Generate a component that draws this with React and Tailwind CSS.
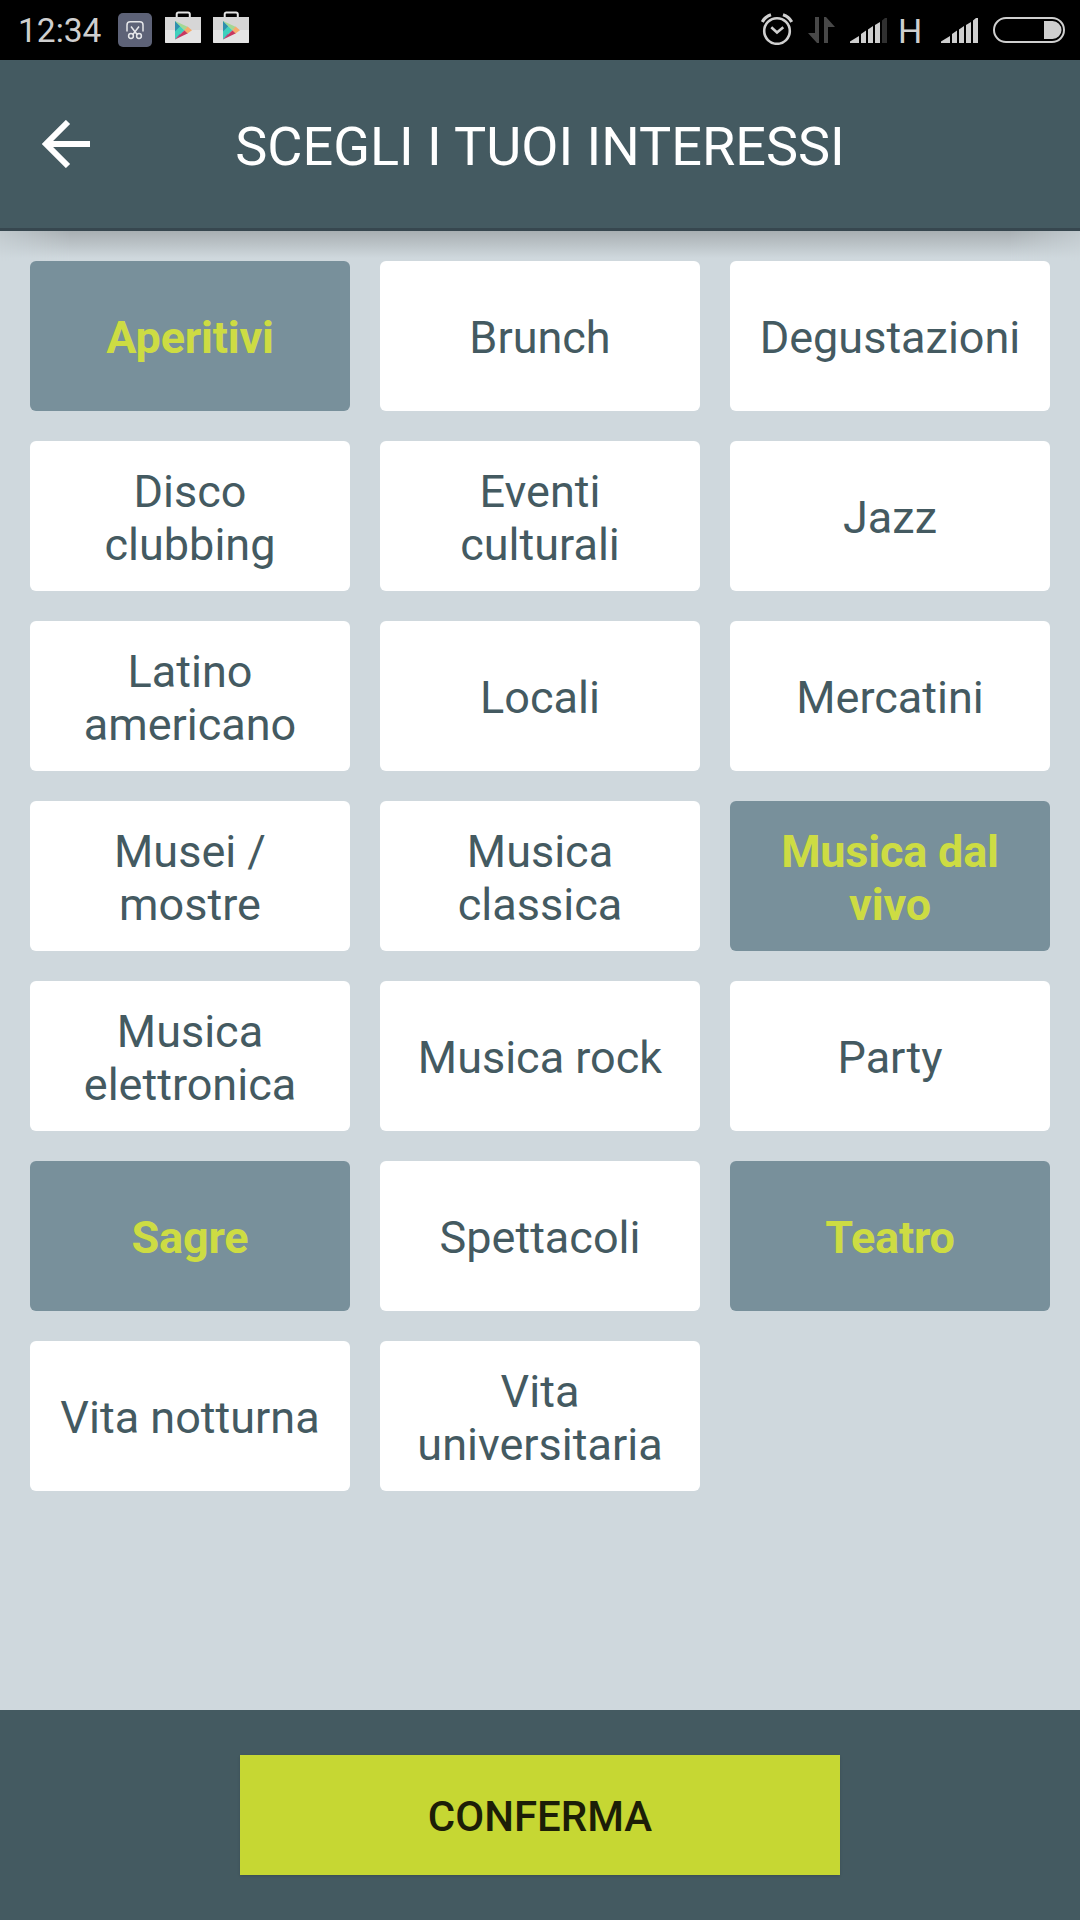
import React, { useState } from "react";

const interests = [
  { id: "aperitivi", label: "Aperitivi" },
  { id: "brunch", label: "Brunch" },
  { id: "degustazioni", label: "Degustazioni" },
  { id: "disco", label: "Disco clubbing" },
  { id: "eventi", label: "Eventi culturali" },
  { id: "jazz", label: "Jazz" },
  { id: "latino", label: "Latino americano" },
  { id: "locali", label: "Locali" },
  { id: "mercatini", label: "Mercatini" },
  { id: "musei", label: "Musei / mostre" },
  { id: "classica", label: "Musica classica" },
  { id: "live", label: "Musica dal vivo" },
  { id: "elettronica", label: "Musica elettronica" },
  { id: "rock", label: "Musica rock" },
  { id: "party", label: "Party" },
  { id: "sagre", label: "Sagre" },
  { id: "spettacoli", label: "Spettacoli" },
  { id: "teatro", label: "Teatro" },
  { id: "notturna", label: "Vita notturna" },
  { id: "universitaria", label: "Vita universitaria" }
];

const ScissorsIcon = () => (
  <svg width="34" height="34" viewBox="0 0 34 34" fill="none" stroke="#e6e7ea" strokeWidth="1.5">
    <rect width="34" height="34" rx="5" fill="#5d6277" stroke="none" />
    <path d="M9 18.5V12a3.2 3.2 0 0 1 3.2-3.2h9.6A3.2 3.2 0 0 1 25 12v6.5" />
    <path d="M13 13.5l6.3 8.2M21 13.5l-6.3 8.2" />
    <circle cx="13" cy="23" r="2.4" />
    <circle cx="21" cy="23" r="2.4" />
  </svg>
);

const PlayStoreIcon = () => (
  <svg width="36" height="32" viewBox="0 0 36 32">
    <path d="M11.7 7V3.2a1.700 1.700 0 0 1 1.700-1.700h9.700a1.700 1.700 0 0 1 1.700 1.700V7" fill="none" stroke="#e4e4e4" strokeWidth="2" />
    <path d="M0 6h36v25.500l-.5.5H.5l-.5-.5z" fill="#e4e4e4" />
    <path d="M0 6h36v13H0z" fill="#d6d6d6" />
    <path d="M10 10v18.500l9.500-9.200z" fill="#3fd0bd" />
    <path d="M10 10v10.500l5.200-5.200z" fill="#2f8fae" />
    <path d="M10 10l13 6-3.500 3.300z" fill="#a5d893" />
    <path d="M10 28.500l13-6.300-3.500-2.900z" fill="#c8375f" />
    <path d="M10 28.500l5.500-4.800-1-.5z" fill="#8a4fa0" />
    <path d="M22.500 15.600l4.500 3.700-4.500 3.200-3-3.200z" fill="#f7ac6b" />
  </svg>
);

const AlarmIcon = () => (
  <svg width="32" height="32" viewBox="0 0 32 32" fill="none" stroke="#cfcfcf">
    <circle cx="16" cy="18" r="12.800" strokeWidth="2.600" />
    <path d="M10.300 14.300l5.700 5.200 6.300-5.200" strokeWidth="2.600" />
    <path d="M1.300 9Q4 3.700 10 1.800M30.700 9Q28 3.700 22 1.800" strokeWidth="3.200" />
  </svg>
);

const DataIcon = () => (
  <svg width="27" height="26" viewBox="0 0 27 26" fill="#484848">
    <path d="M7 0h4v26H9L0 16h7z" />
    <path d="M16 0h2l9 10h-7v16h-4z" />
  </svg>
);

const SignalIcon = ({ level }) => (
  <svg width="37" height="25" viewBox="0 0 37 25" fill="#cfcfcf">
    <path d="M0 25v-1.500l9-5.500v7z" />
    <path d="M11 25V16l5-3.500V25z" />
    <path d="M18 25V11.500L23 8v17z" />
    <path d="M25 25V7l5-3v21z" />
    <path d="M32 25V2.500l3-2.500h2v25z" fill={level === 5 ? "#cfcfcf" : "#303030"} />
  </svg>
);

const BatteryIcon = () => (
  <svg width="72" height="26" viewBox="0 0 72 26">
    <rect x="1" y="1" width="70" height="24" rx="12" fill="none" stroke="#cfcfcf" strokeWidth="2" />
    <path d="M51 4h8.500a9 9 0 0 1 0 18H51z" fill="#cfcfcf" />
  </svg>
);

const StatusBar = () => (
  <div className="flex h-15 items-center justify-between bg-black pl-[18px] pr-[15px] text-[#cfcfcf]">
    <div className="flex items-center">
      <span className="w-[100px] pt-[2px] text-[33.5px] leading-none">12:34</span>
      <ScissorsIcon />
      <div className="ml-[13px] flex gap-3 pb-[6px]">
        <PlayStoreIcon />
        <PlayStoreIcon />
      </div>
    </div>
    <div className="flex h-[34px] items-end pb-[4px]">
      <div className="-mb-[2px] mr-[15px]">
        <AlarmIcon />
      </div>
      <DataIcon />
      <div className="ml-[15px]">
        <SignalIcon level={4} />
      </div>
      <span className="mb-[2px] ml-[11px] w-[43px] text-[34px] leading-[20px]">H</span>
      <SignalIcon level={5} />
      <div className="ml-[15px]">
        <BatteryIcon />
      </div>
    </div>
  </div>
);

const App = () => {
  const [selected, setSelected] = useState(["aperitivi", "live", "sagre", "teatro"]);

  const toggle = (id) => {
    setSelected((prev) => (prev.includes(id) ? prev.filter((item) => item !== id) : [...prev, id]));
  };

  return (
    <div className="flex h-[1920px] w-[1080px] flex-col overflow-hidden bg-[#cfd8dd] font-[Roboto,sans-serif]">
      <StatusBar />

      <header className="flex h-[171px] items-center border-b-3 border-[#37474f] bg-[#445a61] px-[42px]">
        <button className="w-12 text-white" aria-label="Indietro">
          <svg width="48" height="48" viewBox="0 0 48 48" fill="none" stroke="currentColor" strokeWidth="6">
            <path d="M48 24H6M26 2L4 24l22 22" />
          </svg>
        </button>
        <h1 className="flex-1 pt-[5px] pr-12 text-center text-[54px] leading-[64px] text-white">
          SCEGLI I TUOI INTERESSI
        </h1>
      </header>
      {/* header shadow, lighter towards the screen edges */}
      <div className="h-[30px] bg-linear-to-b from-[#a8afb2] to-[#cfd8dd] to-90% [mask-image:linear-gradient(to_right,rgb(0_0_0/0.35),black_70px,black_calc(100%-70px),rgb(0_0_0/0.35))]" />

      <main className="grid flex-1 auto-rows-[150px] grid-cols-3 gap-[30px] px-[30px]">
        {interests.map((interest) => (
          <button
            key={interest.id}
            onClick={() => toggle(interest.id)}
            className={
              selected.includes(interest.id)
                ? "rounded-[6px] bg-[#78909b] px-6 pt-[3px] text-[45px] leading-[53px] font-bold tracking-[-0.2px] text-[#cddc43]"
                : "rounded-[6px] bg-white px-6 pt-[3px] text-[45px] leading-[53px] text-[#445a61]"
            }
          >
            {interest.label}
          </button>
        ))}
      </main>

      <footer className="flex h-[210px] items-center justify-center bg-[#445a61]">
        <button className="h-[120px] w-[600px] bg-[#c6d733] pt-[2px] text-[42px] font-medium text-[#1c1e07] shadow-sm">
          CONFERMA
        </button>
      </footer>
    </div>
  );
};

export default App;
